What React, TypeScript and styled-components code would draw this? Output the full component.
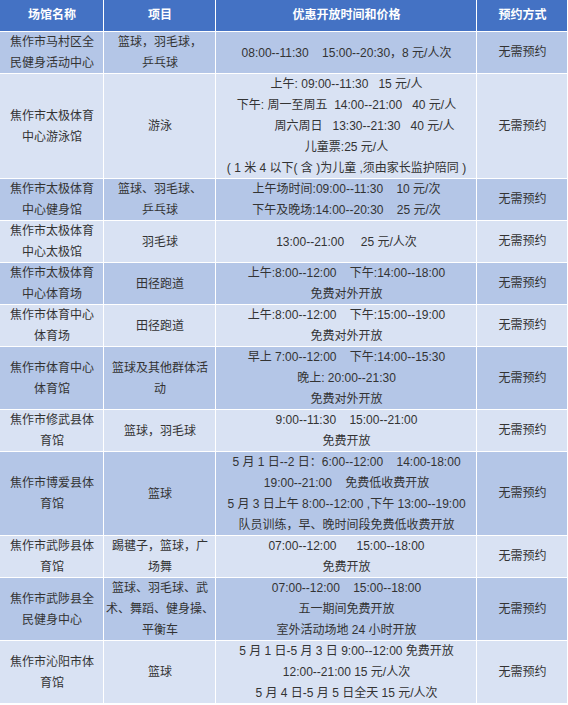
import React from 'react'
import styled, { createGlobalStyle } from 'styled-components'

type Tone = 'head' | 'dark' | 'light'

interface IRow {
  venue: string[]
  sport: string[]
  hours: string[]
}

const rows: IRow[] = [
  {
    venue: ['焦作市马村区全', '民健身活动中心'],
    sport: ['篮球，羽毛球，', '乒乓球'],
    hours: ['08:00--11:30    15:00--20:30，8 元/人次'],
  },
  {
    venue: ['焦作市太极体育', '中心游泳馆'],
    sport: ['游泳'],
    hours: [
      '上午: 09:00--11:30   15 元/人',
      '下午: 周一至周五  14:00--21:00   40 元/人',
      '\u3000\u3000\u3000周六周日   13:30--21:30   40 元/人',
      '儿童票:25 元/人',
      '( 1 米 4 以下( 含 )为儿童 ,须由家长监护陪同 )',
    ],
  },
  {
    venue: ['焦作市太极体育', '中心健身馆'],
    sport: ['篮球、羽毛球、', '乒乓球'],
    hours: ['上午场时间:09:00--11:30    10 元/次', '下午及晚场:14:00--20:30    25 元/次'],
  },
  {
    venue: ['焦作市太极体育', '中心太极馆'],
    sport: ['羽毛球'],
    hours: ['13:00--21:00     25 元/人次'],
  },
  {
    venue: ['焦作市太极体育', '中心体育场'],
    sport: ['田径跑道'],
    hours: ['上午:8:00--12:00    下午:14:00--18:00', '免费对外开放'],
  },
  {
    venue: ['焦作市体育中心', '体育场'],
    sport: ['田径跑道'],
    hours: ['上午:8:00--12:00    下午:15:00--19:00', '免费对外开放'],
  },
  {
    venue: ['焦作市体育中心', '体育馆'],
    sport: ['篮球及其他群体活', '动'],
    hours: ['早上 7:00--12:00    下午:14:00--15:30', '晚上: 20:00--21:30', '免费对外开放'],
  },
  {
    venue: ['焦作市修武县体', '育馆'],
    sport: ['篮球，羽毛球'],
    hours: ['9:00--11:30    15:00--21:00', '免费开放'],
  },
  {
    venue: ['焦作市博爱县体', '育馆'],
    sport: ['篮球'],
    hours: [
      '5 月 1 日--2 日：6:00--12:00    14:00-18:00',
      '19:00--21:00    免费低收费开放',
      '5 月 3 日上午 8:00--12:00 ,下午 13:00--19:00',
      '队员训练，早、晚时间段免费低收费开放',
    ],
  },
  {
    venue: ['焦作市武陟县体', '育馆'],
    sport: ['踢毽子，篮球，广', '场舞'],
    hours: ['07:00--12:00      15:00--18:00', '免费开放'],
  },
  {
    venue: ['焦作市武陟县全', '民健身中心'],
    sport: ['篮球、羽毛球、武', '术、舞蹈、健身操、', '平衡车'],
    hours: ['07:00--12:00    15:00--18:00', '五一期间免费开放', '室外活动场地 24 小时开放'],
  },
  {
    venue: ['焦作市沁阳市体', '育馆'],
    sport: ['篮球'],
    hours: [
      '5 月 1 日-5 月 3 日 9:00--12:00 免费开放',
      '12:00--21:00 15 元/人次',
      '5 月 4 日-5 月 5 日全天 15 元/人次',
    ],
  },
]

const headings = ['场馆名称', '项目', '优惠开放时间和价格', '预约方式']

const Lines = ({ items }: { items: string[] }) => (
  <>
    {items.map((t, i) => (
      <Line key={i}>{t}</Line>
    ))}
  </>
)

const App = () => (
  <>
    <GlobalStyle />
    <Table>
      {headings.map((h) => (
        <Cell key={h} $tone="head">
          {h}
        </Cell>
      ))}
      {rows.map((r, i) => {
        const tone: Tone = i % 2 === 0 ? 'dark' : 'light'
        return (
          <React.Fragment key={i}>
            <Cell $tone={tone}>
              <Lines items={r.venue} />
            </Cell>
            <Cell $tone={tone}>
              <Lines items={r.sport} />
            </Cell>
            <Cell $tone={tone}>
              <Lines items={r.hours} />
            </Cell>
            <Cell $tone={tone}>无需预约</Cell>
          </React.Fragment>
        )
      })}
    </Table>
  </>
)

const GlobalStyle = createGlobalStyle`
  body {
    margin: 0;
    background: #fff;
    font-family: "Liberation Sans", "Noto Sans CJK SC", sans-serif;
  }
`

const toneColor: Record<Tone, string> = {
  head: '#4472c4',
  dark: '#b4c6e7',
  light: '#d9e2f3',
}

const Table = styled.div`
  display: grid;
  grid-template-columns: 104px 112px 261px 91px;
  width: 568px;
  background: #fff;
`

const Cell = styled.div<{ $tone: Tone }>`
  display: flex;
  flex-direction: column;
  align-items: center;
  justify-content: center;
  box-sizing: border-box;
  min-height: ${(p) => (p.$tone === 'head' ? '32px' : '21px')};
  padding-bottom: 1px;
  background: ${(p) => toneColor[p.$tone]};
  box-shadow: inset -1px -1px 0 #fff;
  color: ${(p) => (p.$tone === 'head' ? '#fff' : '#333')};
  font-size: 12px;
  font-weight: ${(p) => (p.$tone === 'head' ? 700 : 400)};
  line-height: 21px;
  text-align: center;
`

const Line = styled.div`
  white-space: pre;
  height: 21px;
  &:last-child {
    height: 20px;
  }
`

export default App
